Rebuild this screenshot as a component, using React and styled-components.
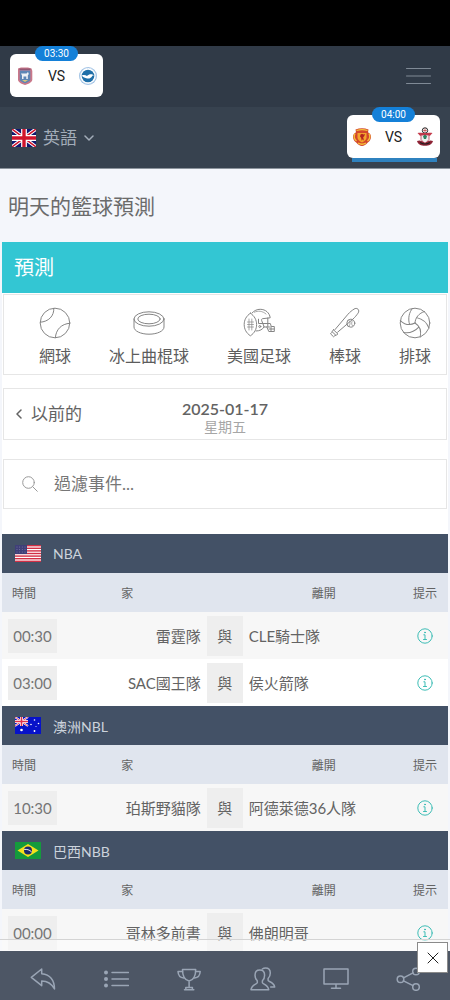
import React from 'react';
import styled, { createGlobalStyle } from 'styled-components';

const colors = {
  header: '#303a47',
  headerAlt: '#37424f',
  page: '#f4f6fb',
  accent: '#33c6d3',
  league: '#435166',
  tableHead: '#e0e5ee',
  nav: '#4d5665',
  navIcon: '#9aa5b5',
  border: '#e6e6e6',
  text: '#636363',
  tip: '#3dbdb5',
};

const GlobalStyle = createGlobalStyle`
  * { box-sizing: border-box; }

  body {
    margin: 0;
    background: ${colors.page};
    color: ${colors.text};
    font-family: Lato, 'Noto Sans CJK TC', sans-serif;
  }

  button, input, select { font: inherit; color: inherit; }
`;

const Shell = styled.div`
  display: flex;
  flex-direction: column;
  height: 100vh;
  overflow: hidden;
`;

const StatusBar = styled.div`
  flex: none;
  height: 46px;
  background: #000;
`;

const HeaderRow = styled.div`
  flex: none;
  display: flex;
  justify-content: space-between;
  align-items: flex-start;
  height: ${({ $alt }) => ($alt ? 62 : 61)}px;
  padding: 8px 10px 0;
  background: ${({ $alt }) => ($alt ? colors.headerAlt : colors.header)};
  border-bottom: ${({ $alt }) => ($alt ? '1px solid #8c949d' : 'none')};
`;

const MatchCard = styled.a`
  position: relative;
  display: flex;
  align-items: center;
  justify-content: space-between;
  width: 93px;
  height: 43px;
  padding: 0 5px;
  border-radius: 6px;
  background: #fff;
  color: #222;
  font-family: Roboto, sans-serif;
  font-size: 14px;
  text-decoration: none;

  &::after {
    content: '';
    display: ${({ $live }) => ($live ? 'block' : 'none')};
    position: absolute;
    top: 100%;
    left: 5px;
    right: 3px;
    height: 4px;
    background: #2f82bf;
  }
`;

const Kickoff = styled.span`
  position: absolute;
  top: -8px;
  left: 25px;
  width: 43px;
  border-radius: 8px;
  background: #1480d8;
  color: #fff;
  font-size: 10px;
  line-height: 15px;
  text-align: center;
`;

const IconButton = styled.button`
  display: flex;
  padding: 0;
  border: 0;
  background: none;
  cursor: pointer;
`;

const MenuButton = styled(IconButton)`
  margin: 13px 9px 0 0;
  color: #808a96;
`;

const Language = styled.label`
  display: flex;
  align-items: center;
  padding: 11px 0 0 2px;
  color: #a3adb9;

  select {
    appearance: none;
    margin: 0 7px 0 7px;
    padding: 0;
    border: 0;
    background: none;
    font-size: 17px;
    line-height: 24px;
  }
`;

const Main = styled.main`
  flex: 1;
  min-height: 0;
  overflow-y: auto;
  scrollbar-width: none;
`;

const PageTitle = styled.h1`
  margin: 0;
  padding: 0 8px;
  font-size: 21px;
  font-weight: 400;
  line-height: 73px;
  color: #6b6b6b;
`;

const Panel = styled.section`
  margin: 0 2px;
  background: #fff;
`;

const PanelTitle = styled.h2`
  margin: 0;
  padding: 0 12px;
  background: ${colors.accent};
  color: #fff;
  font-size: 20px;
  font-weight: 400;
  line-height: 51px;
`;

const Card = styled.div`
  margin: 0 1px;
  border: 1px solid ${colors.border};
`;

const SportTabs = styled(Card).attrs({ as: 'nav' })`
  display: flex;
  gap: 38px;
  height: 81px;
  margin-top: 1px;
  padding: 12px 0 0 35px;
  overflow-x: auto;
  scrollbar-width: none;
`;

const SportLink = styled.a`
  flex: none;
  display: flex;
  flex-direction: column;
  align-items: center;
  gap: 5px;
  color: #5c5c5c;
  font-size: 16px;
  line-height: 24px;
  text-decoration: none;

  svg { color: #858585; }
`;

const DateBar = styled(Card)`
  display: grid;
  grid-template-columns: 1fr auto 1fr;
  align-items: center;
  height: 52px;
  margin-top: 13px;
  padding: 0 12px;
`;

const PrevButton = styled(IconButton)`
  align-items: center;
  gap: 9px;
  font-size: 17px;
  line-height: 24px;
`;

const CurrentDate = styled.div`
  padding-top: 8px;
  text-align: center;

  time {
    display: block;
    font-size: 16px;
    font-weight: 600;
    line-height: 18px;
  }

  span {
    display: block;
    color: #a6a6a6;
    font-size: 14px;
    line-height: 18px;
  }
`;

const SearchBar = styled(Card).attrs({ as: 'label' })`
  display: flex;
  align-items: center;
  gap: 16px;
  height: 50px;
  margin-top: 19px;
  padding: 0 18px;
  color: #999;

  input {
    flex: 1;
    min-width: 0;
    padding: 0;
    border: 0;
    outline: 0;
    background: none;
    color: #777;
    font-size: 17px;
    line-height: 24px;
  }

  input::placeholder { color: #777; opacity: 1; }
`;

const Leagues = styled.div`
  padding-top: 25px;
`;

const LeagueTable = styled.table`
  width: 100%;
  table-layout: fixed;
  border-collapse: collapse;

  caption {
    height: 39px;
    padding: 0 13px;
    background: ${colors.league};
    color: #ccd3dc;
    font-size: 14px;
    text-align: left;
  }

  th {
    height: 39px;
    padding: 0;
    background: ${colors.tableHead};
    font-size: 12px;
    font-weight: 400;
  }

  td {
    height: 47px;
    padding: 0;
    font-size: 15px;
    white-space: nowrap;
  }

  tbody tr:nth-child(odd) { background: #f7f7f7; }

  th:first-child { padding-left: 10px; text-align: left; }
  th.home { padding-right: 10px; }
  td.home { padding-right: 3px; text-align: right; }
  td.away { padding-left: 3px; }
`;

const LeagueName = styled.span`
  display: flex;
  align-items: center;
  gap: 12px;
  height: 39px;
`;

const TimeBadge = styled.span`
  display: block;
  width: 49px;
  margin-left: 6px;
  background: #eee;
  color: #757575;
  line-height: 34px;
  text-align: center;
`;

const Versus = styled.span`
  display: block;
  width: 36px;
  margin: 0 auto;
  background: #eee;
  line-height: 40px;
  text-align: center;
`;

const TipButton = styled(IconButton)`
  margin: 0 auto;
  color: ${colors.tip};
`;

const Dock = styled.footer`
  position: relative;
  flex: none;
`;

const AdStrip = styled.div`
  position: absolute;
  bottom: 100%;
  left: 0;
  right: 0;
  height: 12px;
  border-top: 1px solid #d4d4d4;
  background: rgba(255, 255, 255, 0.4);
`;

const CloseButton = styled(IconButton)`
  position: absolute;
  top: -9px;
  right: 2px;
  align-items: center;
  justify-content: center;
  width: 31px;
  height: 31px;
  border: 1px solid #8a8a8a;
  background: #fff;
  color: #222;
`;

const BottomNav = styled.nav`
  display: grid;
  grid-template-columns: repeat(6, 1fr);
  align-items: center;
  justify-items: center;
  height: 49px;
  padding: 6px 4px 0 6px;
  background: ${colors.nav};

  a { display: flex; color: ${colors.navIcon}; }
`;

function Icon({ w = 32, h = 32, sw = 1, children }) {
  return (
    <svg
      width={w}
      height={h}
      viewBox={`0 0 ${w} ${h}`}
      fill="none"
      stroke="currentColor"
      strokeWidth={sw}
      strokeLinecap="round"
      strokeLinejoin="round"
      aria-hidden="true"
    >
      {children}
    </svg>
  );
}

const sports = [
  {
    name: '網球',
    icon: (
      <>
        <circle cx="16" cy="16" r="14.8" />
        <path d="M14.8 1.3C15.3 9 9.5 14.8 1.3 15.2M30.7 16.3C22.5 16.8 16.8 22.5 16.4 30.7" />
      </>
    ),
  },
  {
    name: '冰上曲棍球',
    icon: (
      <>
        <ellipse cx="16" cy="12" rx="15" ry="7.2" />
        <ellipse cx="16" cy="12" rx="11.2" ry="4.8" />
        <path d="M1 12v8c0 4 6.7 7.2 15 7.2S31 24 31 20v-8" />
      </>
    ),
  },
  {
    name: '美國足球',
    icon: (
      <>
        <path d="M7.4 6.2C3.2 9 1.2 13 1.2 17.5S3.2 26 7.4 28.8c4.2-2.8 6.2-6.8 6.2-11.3S11.6 9 7.4 6.2Z" />
        <path d="M6 12v11M8.8 12v11M4.500 15h6M4.500 17.5h6M4.500 20h6" strokeWidth="0.7" />
        <path d="M9 6C11.4 3.5 14 2.3 17.2 2.3c5.4 0 9.4 3.6 10 8.5l-7.7.9c-.8.1-1.2.9-.9 1.7l2.5 6.4c-1.4 2.6-4.2 4.2-8 4.2" />
        <path d="M11.5 5.2c3.400-1.700 8-1.400 11.500 1.800" strokeWidth="0.7" />
        <path d="M15.5 12.2v4.300h9.300M24.8 11v8.500M20.500 20h6M24.800 16.500h2.500l1 3h3v5h-5.500l-2-4.500M28 19.500v5M26 22h5" />
        <circle cx="16.8" cy="19.500" r="1" />
      </>
    ),
  },
  {
    name: '棒球',
    icon: (
      <>
        <path d="M6 22.600 19 7.200c2-2.300 3.900-3.600 6-5.100 1.500-1 3-.9 4 .1s1 2.600 0 4c-1.500 2.100-2.900 4-5.200 6L8.600 25.200" />
        <path d="m4.500 22.800 4.400 4.200c-.8 1-2 1.200-3 1.600l-1.300 1.200-3.100-3 1.300-1.400c.3-1 .6-1.900 1.700-2.600ZM3.400 25l3.200 3" />
        <circle cx="21.800" cy="16.200" r="4" />
        <path d="M20 13.500c1.500 1.200 1.500 4 .1 5.500M23.700 13.500c-1.500 1.200-1.500 4-.1 5.500" strokeWidth="0.7" />
      </>
    ),
  },
  {
    name: '排球',
    icon: (
      <>
        <circle cx="16" cy="16" r="14.8" />
        {[0, 120, 240].map((angle) => (
          <path
            key={angle}
            transform={`rotate(${angle} 16 16)`}
            d="M16 16c.2-5.500 4-9.800 9.500-11.500M10.500 17.200C8.800 11.500 10 5.500 13.400 1.400"
          />
        ))}
      </>
    ),
  },
];

function UnionJack({ w = 25, h = 18 }) {
  return (
    <svg width={w} height={h} viewBox="0 0 50 36" preserveAspectRatio="none" aria-hidden="true">
      <path fill="#10186f" d="M0 0h50v36H0z" />
      <path d="m0 0 50 36M50 0 0 36" stroke="#fff" strokeWidth="7" />
      <path d="m0 0 50 36M50 0 0 36" stroke="#d0142c" strokeWidth="3" />
      <path d="M25 0v36M0 18h50" stroke="#fff" strokeWidth="12" />
      <path d="M25 0v36M0 18h50" stroke="#d0142c" strokeWidth="7" />
    </svg>
  );
}

function UsFlag() {
  return (
    <svg width="26" height="17" viewBox="0 0 26 17" aria-hidden="true">
      <path fill="#fff" d="M0 0h26v17H0z" />
      {[0, 1, 2, 3, 4, 5, 6].map((n) => (
        <rect key={n} y={n * 2.6} width="26" height="1.4" fill="#d22f45" />
      ))}
      <path fill="#3f3f78" d="M0 0h12v9H0z" />
      {[2, 4.5, 7].map((y) =>
        [2, 4.6, 7.3, 10].map((x) => <circle key={`${x}-${y}`} cx={x} cy={y} r="0.5" fill="#7d7da8" />)
      )}
    </svg>
  );
}

function AuFlag() {
  return (
    <svg width="26" height="17" viewBox="0 0 26 17" aria-hidden="true">
      <path fill="#0712c9" d="M0 0h26v17H0z" />
      <path d="m0 0 13 9M13 0 0 9" stroke="#fff" strokeWidth="2" />
      <path d="m0 0 13 9M13 0 0 9" stroke="#e0304a" strokeWidth="0.8" />
      <path d="M6.5 0v9M0 4.5h13" stroke="#fff" strokeWidth="3" />
      <path d="M6.5 0v9M0 4.5h13" stroke="#e0304a" strokeWidth="1.6" />
      <g fill="#fff">
        <circle cx="6.5" cy="13" r="1.3" />
        <circle cx="19.5" cy="3" r="0.8" />
        <circle cx="16" cy="7.5" r="0.8" />
        <circle cx="23.5" cy="6.5" r="0.8" />
        <circle cx="21" cy="9.5" r="0.5" />
        <circle cx="19.5" cy="14" r="0.9" />
      </g>
    </svg>
  );
}

function BrFlag() {
  return (
    <svg width="26" height="17" viewBox="0 0 26 17" aria-hidden="true">
      <path fill="#149a3c" d="M0 0h26v17H0z" />
      <path fill="#f5e01c" d="m13 2 10.5 6.5L13 15 2.5 8.5z" />
      <circle cx="13" cy="8.5" r="4" fill="#1c2a6c" />
      <path d="M9.2 7.5c2.6-.4 5.4.3 7.4 2.4" stroke="#fff" strokeWidth="0.9" fill="none" />
    </svg>
  );
}

function IpswichCrest() {
  return (
    <svg width="20" height="20" viewBox="0 0 20 20" aria-hidden="true">
      <path d="M3 2.500 6 1.500h7l3.500 1 .8 2.500v8.500c0 2.500-3.300 4.300-7.300 5.500-4-1.200-7-3-7-5.500V5z" fill="#c9788a" />
      <path d="M4.800 4.500h10.500v9c0 1.600-2.400 2.800-5.300 3.700-2.900-.9-5.200-2.100-5.200-3.700z" fill="#5d86b5" />
      <path d="M6 7.500h5.500L13 6l.8 2-1 1.500V13h-1.500v-2.500H8.500V13H7V9.500z" fill="#eef2f5" />
      <path d="M7 14h6l-3 2z" fill="#d8c77a" />
      <path d="M4.500 3.200h11" stroke="#7a4a6b" strokeWidth="1" />
    </svg>
  );
}

function BrightonCrest() {
  return (
    <svg width="20" height="20" viewBox="0 0 20 20" aria-hidden="true">
      <circle cx="10" cy="10" r="9" fill="#9cc0e4" />
      <circle cx="10" cy="10" r="7.9" fill="#fff" stroke="#c9dcf0" strokeDasharray="1 1" />
      <circle cx="10" cy="10" r="6.3" fill="#1f6fa8" />
      <path d="M3.8 9.5c2.2-.8 3.8-.3 5.2.4 1.500-1.700 3.600-2 5.500-1.500l1.500.9-1.700.4c-.8 2.300-3.300 3.300-6 2.600-2-.5-3.600-1.400-4.500-2.800z" fill="#fff" />
    </svg>
  );
}

function UnitedCrest() {
  return (
    <svg width="20" height="20" viewBox="0 0 20 20" aria-hidden="true">
      <path d="M3.500 2.500C8 .8 12 .8 16.500 2.500l-.5 2.700c2 1 3.200 2.700 3 5-.2 2.200-1.300 4-3.200 5.200C14 17.500 12 18.600 10 19c-2-.4-4-1.500-5.800-3.600C2.300 14.200 1.200 12.400 1 10.200c-.2-2.300 1-4 3-5z" fill="#d3472c" />
      <path d="M3 6.500C1.800 9 2 12 4.500 14M17 6.500c1.200 2.500 1 5.500-1.500 7.500M4.500 3.500c4-1.300 7-1.300 11 0M6 16c2.600 1.600 5.400 1.600 8 0" fill="none" stroke="#f5c33b" strokeWidth="1.3" />
      <path d="M5.500 6h9v4.500c0 2.200-1.800 3.700-4.500 5-2.700-1.300-4.500-2.800-4.500-5z" fill="#f3a52d" />
      <path d="M8.500 7.500 10 6.800l1.500.7 1.500-.6-.8 2.400-1 1 .8 3.400-1.300-1.500-1 1.600-.6-3-1.100-1.200z" fill="#b3251f" />
    </svg>
  );
}

function SouthamptonCrest() {
  return (
    <svg width="20" height="20" viewBox="0 0 20 20" aria-hidden="true">
      <circle cx="10" cy="3.500" r="2.700" fill="#fff" stroke="#222" />
      <path d="M8.200 3.500h3.600M10 1.500v4" stroke="#b33" strokeWidth="0.7" />
      <path d="M2.500 6c3-.8 4.500 0 7.500 0s4.500-.8 7.500 0l-2.500 2.700H5z" fill="#c43b4b" />
      <path d="M6 8h8v4.500L10 17l-4-4.500z" fill="#eee" stroke="#b9344a" strokeWidth="0.8" />
      <path d="M10 7.500 12 9.300 11 12H9L8 9.300z" fill="#2d8261" />
      <path d="M2 14c3-1.500 5 0 8 1.700C13 14 15 12.500 18 14c-1 3.500-4 4.800-8 4.800S3 17.500 2 14z" fill="#8f2436" />
      <path d="M5 15.500c3 1.800 7 1.800 10 0" stroke="#222" strokeWidth="1.2" fill="none" />
    </svg>
  );
}

const leagues = [
  {
    name: 'NBA',
    flag: <UsFlag />,
    games: [
      { time: '00:30', home: '雷霆隊', away: 'CLE騎士隊' },
      { time: '03:00', home: 'SAC國王隊', away: '侯火箭隊' },
    ],
  },
  {
    name: '澳洲NBL',
    flag: <AuFlag />,
    games: [{ time: '10:30', home: '珀斯野貓隊', away: '阿德萊德36人隊' }],
  },
  {
    name: '巴西NBB',
    flag: <BrFlag />,
    games: [{ time: '00:00', home: '哥林多前書', away: '佛朗明哥' }],
  },
];

const navItems = [
  {
    label: '返回',
    icon: <path d="M1.3 10.3 11.7 2v4.700c7.800.8 12.600 6 12.800 15.300-3-5.500-6.800-8-12.800-8v4.700z" />,
  },
  {
    label: '列表',
    icon: (
      <>
        <path d="M9 5.500h16.500M9 12h16.500M9 18.500h16.500" />
        <g fill="currentColor" stroke="none">
          <circle cx="3" cy="5.500" r="2" />
          <circle cx="3" cy="12" r="2" />
          <circle cx="3" cy="18.500" r="2" />
        </g>
      </>
    ),
  },
  {
    label: '獎盃',
    icon: (
      <>
        <path d="M6.500 2.500h13.200c0 5.500-1.500 10.500-6.600 11.500C8 13 6.500 8 6.500 2.500ZM13.100 14v6.500M9.800 20.500h6.600v2.200H9.800zM8.500 22.700h9.300" />
        <path d="M6.500 4.500H2c.2 3.800 2.300 6.200 5.700 6.500M19.700 4.500h4.500c-.2 3.800-2.300 6.200-5.700 6.500" />
      </>
    ),
  },
  {
    label: '會員',
    icon: (
      <>
        <path d="M9.800 3c3 0 4.800 2 4.800 5.200 0 2.200-.8 4.300-2.200 5.600v2c0 1 5.600 1.700 6.300 6.900H1c.7-5.200 6.300-5.900 6.300-6.900v-2C5.900 12.500 5 10.400 5 8.200 5 5 6.800 3 9.800 3Z" />
        <path d="M12.300 2c1-.7 2-1 3.200-1 3 0 4.800 2 4.800 5 0 2.200-.8 4.200-2.200 5.500v2c0 1 5.900 1.500 6.600 6.500h-4" />
      </>
    ),
  },
  {
    label: '直播',
    icon: <path d="M1 2h24v15H1zM13 17v4M8.500 21.300h9" />,
  },
  {
    label: '分享',
    icon: (
      <>
        <circle cx="4.500" cy="12.300" r="3.300" />
        <circle cx="20" cy="4.500" r="3.300" />
        <circle cx="20" cy="20" r="3.300" />
        <path d="m7.500 10.800 9.500-4.900M7.500 13.800l9.500 4.900" />
      </>
    ),
  },
];

function League({ name, flag, games }) {
  return (
    <LeagueTable>
      <caption>
        <LeagueName>
          {flag}
          {name}
        </LeagueName>
      </caption>
      <colgroup>
        <col style={{ width: 59 }} />
        <col style={{ width: '32%' }} />
        <col style={{ width: 42 }} />
        <col />
        <col style={{ width: 46 }} />
      </colgroup>
      <thead>
        <tr>
          <th>時間</th>
          <th className="home">家</th>
          <th aria-label="對陣" />
          <th>離開</th>
          <th>提示</th>
        </tr>
      </thead>
      <tbody>
        {games.map((game) => (
          <tr key={game.home}>
            <td><TimeBadge>{game.time}</TimeBadge></td>
            <td className="home">{game.home}</td>
            <td><Versus>與</Versus></td>
            <td className="away">{game.away}</td>
            <td>
              <TipButton type="button" aria-label="提示">
                <Icon w={16} h={16}>
                  <circle cx="8" cy="8" r="7.2" />
                  <path d="M6.800 6.800H8v4.700M6.500 11.500h3" />
                  <circle cx="8" cy="4.500" r="0.5" fill="currentColor" />
                </Icon>
              </TipButton>
            </td>
          </tr>
        ))}
      </tbody>
    </LeagueTable>
  );
}

function App() {
  return (
    <Shell>
      <GlobalStyle />
      <StatusBar />
      <header>
        <HeaderRow>
          <MatchCard href="#match-1">
            <Kickoff>03:30</Kickoff>
            <IpswichCrest />
            VS
            <BrightonCrest />
          </MatchCard>
          <MenuButton type="button" aria-label="選單">
            <Icon w={25} h={18}>
              <path d="M.5 1.500h24M.5 9h24M.5 16.500h24" />
            </Icon>
          </MenuButton>
        </HeaderRow>
        <HeaderRow $alt>
          <Language>
            <UnionJack w={24} />
            <select aria-label="語言">
              <option>英語</option>
            </select>
            <Icon w={10} h={8} sw={1.5}>
              <path d="m1 2 4 4 4-4" />
            </Icon>
          </Language>
          <MatchCard href="#match-2" $live>
            <Kickoff>04:00</Kickoff>
            <UnitedCrest />
            VS
            <SouthamptonCrest />
          </MatchCard>
        </HeaderRow>
      </header>

      <Main>
        <PageTitle>明天的籃球預測</PageTitle>
        <Panel>
          <PanelTitle>預測</PanelTitle>
          <SportTabs>
            {sports.map(({ name, icon }) => (
              <SportLink key={name} href="#sport">
                <Icon>{icon}</Icon>
                {name}
              </SportLink>
            ))}
          </SportTabs>

          <DateBar>
            <PrevButton type="button">
              <Icon w={6} h={10} sw={1.5}>
                <path d="M5 1 1 5l4 4" />
              </Icon>
              以前的
            </PrevButton>
            <CurrentDate>
              <time dateTime="2025-01-17">2025-01-17</time>
              <span>星期五</span>
            </CurrentDate>
          </DateBar>

          <SearchBar>
            <Icon w={16} h={16}>
              <circle cx="6.500" cy="6.500" r="5.800" />
              <path d="m10.800 10.800 4.500 4.500" />
            </Icon>
            <input type="text" placeholder="過濾事件..." aria-label="過濾事件" />
          </SearchBar>

          <Leagues>
            {leagues.map((league) => (
              <League key={league.name} {...league} />
            ))}
          </Leagues>
        </Panel>
      </Main>

      <Dock>
        <AdStrip />
        <BottomNav>
          {navItems.map(({ label, icon }) => (
            <a key={label} href="#nav" aria-label={label}>
              <Icon w={26} h={24} sw={1.5}>{icon}</Icon>
            </a>
          ))}
        </BottomNav>
        <CloseButton type="button" aria-label="關閉">
          <Icon w={12} h={12}>
            <path d="m1 1 10 10M11 1 1 11" />
          </Icon>
        </CloseButton>
      </Dock>
    </Shell>
  );
}

export default App;
